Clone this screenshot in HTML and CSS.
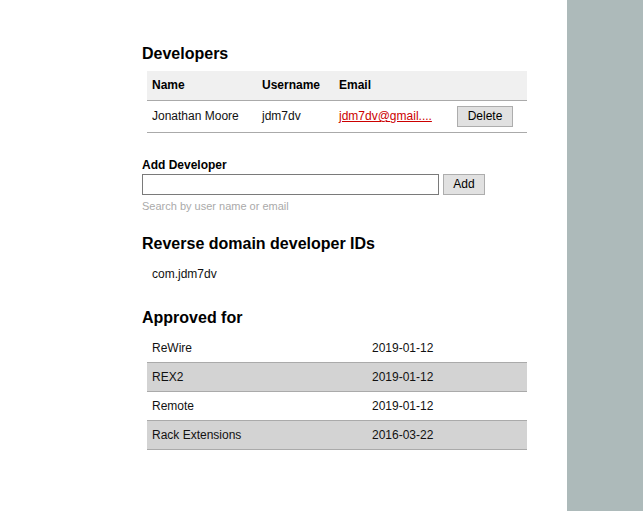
FILE: index.html
```html
<!DOCTYPE html>
<html>
<head>
<meta charset="utf-8">
<link rel="stylesheet" href="styles.css">
</head>
<body>
<div class="layout">
  <main class="main">
    <h2 class="heading">Developers</h2>
    <table class="dev-table">
      <thead>
        <tr>
          <th class="c-name">Name</th>
          <th class="c-user">Username</th>
          <th class="c-email">Email</th>
          <th class="c-act"></th>
        </tr>
      </thead>
      <tbody>
        <tr>
          <td>Jonathan Moore</td>
          <td>jdm7dv</td>
          <td><a class="email" href="#">jdm7dv@gmail....</a></td>
          <td><button class="btn btn-delete">Delete</button></td>
        </tr>
      </tbody>
    </table>

    <div class="add-block">
      <label class="add-label">Add Developer</label>
      <div class="add-row">
        <input class="add-input" type="text">
        <button class="btn btn-add">Add</button>
      </div>
      <div class="hint">Search by user name or email</div>
    </div>

    <h2 class="heading heading-rd">Reverse domain developer IDs</h2>
    <div class="rd-id">com.jdm7dv</div>

    <h2 class="heading heading-ap">Approved for</h2>
    <table class="ap-table">
      <tbody>
        <tr><td class="c-prod">ReWire</td><td>2019-01-12</td></tr>
        <tr class="alt"><td class="c-prod">REX2</td><td>2019-01-12</td></tr>
        <tr><td class="c-prod">Remote</td><td>2019-01-12</td></tr>
        <tr class="alt"><td class="c-prod">Rack Extensions</td><td>2016-03-22</td></tr>
      </tbody>
    </table>
  </main>
  <aside class="sidebar"></aside>
</div>
</body>
</html>
```
FILE: styles.css
```css
html, body {
  margin: 0;
  padding: 0;
  height: 100%;
  background: #fff;
}
body {
  font-family: Arial, "Liberation Sans", sans-serif;
  font-size: 12px;
  color: #111;
}
.layout {
  display: flex;
  min-height: 100%;
}
.main {
  flex: 1;
  padding: 45px 0 0 142px;
}
.sidebar {
  width: 76px;
  background: #adbaba;
}
.heading {
  font-size: 16px;
  font-weight: bold;
  line-height: 18px;
  margin: 0 0 8px;
  color: #000;
}
.dev-table {
  margin-left: 5px;
  width: 380px;
  border-collapse: collapse;
  table-layout: fixed;
}
.dev-table th,
.dev-table td {
  text-align: left;
  padding: 0 5px;
  font-size: 12px;
  line-height: 14px;
  vertical-align: middle;
  white-space: nowrap;
}
.dev-table thead tr {
  background: #f0f0f0;
  height: 29px;
  border-bottom: 1px solid #aaa;
}
.dev-table th { font-weight: bold; color: #000; }
.dev-table tbody tr {
  height: 32px;
  border-bottom: 1px solid #aaa;
}
.c-name { width: 100px; }
.c-user { width: 67px; }
.c-email { width: 108px; }
.email {
  color: #cc0000;
  text-decoration: underline;
}
.btn {
  font-family: Arial, "Liberation Sans", sans-serif;
  font-size: 12px;
  color: #000;
  background: #e1e1e1;
  border: 1px solid #adadad;
  border-radius: 0;
  padding: 0;
  margin: 0;
  height: 21px;
  line-height: 19px;
}
.btn-delete {
  width: 56px;
  display: block;
}
.add-block {
  margin-top: 25px;
}
.add-label {
  display: block;
  font-weight: bold;
  font-size: 12px;
  line-height: 14px;
  color: #000;
}
.add-row {
  display: flex;
  align-items: center;
  margin-top: 2px;
}
.add-input {
  box-sizing: border-box;
  width: 297px;
  height: 21px;
  margin: 0 4px 0 0;
  border: 1px solid #7a7a7a;
  padding: 0 3px;
  font-size: 12px;
  background: #fff;
}
.btn-add {
  width: 42px;
}
.hint {
  margin-top: 5px;
  font-size: 11px;
  line-height: 13px;
  color: #aaa;
}
.heading-rd {
  margin-top: 22px;
  margin-bottom: 14px;
}
.rd-id {
  padding-left: 10px;
  font-size: 12px;
  line-height: 14px;
}
.heading-ap {
  margin-top: 28px;
  margin-bottom: 7px;
}
.ap-table {
  margin-left: 5px;
  width: 380px;
  border-collapse: collapse;
  table-layout: fixed;
}
.ap-table tr {
  height: 29px;
  border-bottom: 1px solid #aaa;
}
.ap-table tr.alt {
  background: #d3d3d3;
}
.ap-table td {
  padding: 0 5px;
  font-size: 12px;
  line-height: 14px;
  vertical-align: middle;
}
.c-prod { width: 210px; }
```
